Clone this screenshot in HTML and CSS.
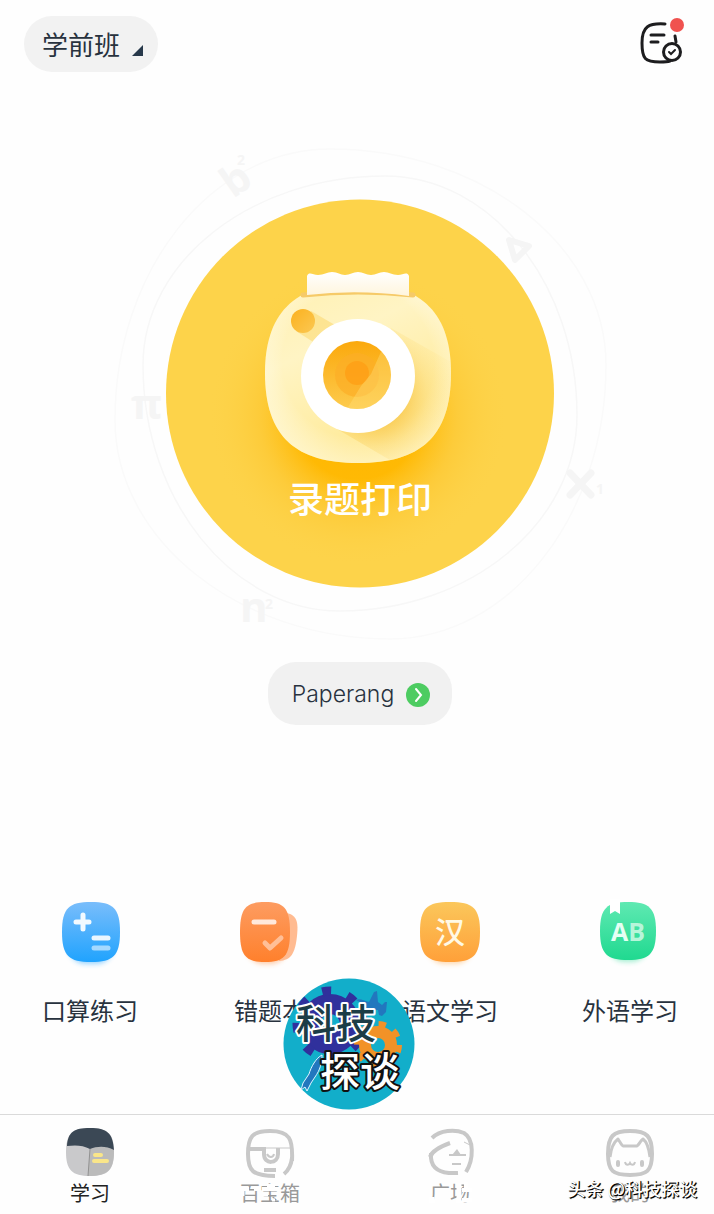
FILE: index.html
```html
<!DOCTYPE html>
<html lang="zh-CN">
<head>
<meta charset="utf-8">
<meta name="viewport" content="width=device-width, initial-scale=1">
<title>学习</title>
<link rel="stylesheet" href="styles.css">
</head>
<body>
<div class="page">
  <header class="topbar">
    <button class="grade" type="button">学前班
      <svg class="grade-mark" viewBox="0 0 11 11" aria-hidden="true"><path d="M11 0V11H0Z" fill="#27384a"/></svg>
    </button>
    <button class="tasks" type="button" aria-label="任务">
      <svg viewBox="0 0 48 48" fill="none" stroke="#1d1d1f" stroke-width="3" stroke-linecap="round" aria-hidden="true">
        <path d="M27 4C11 3 4 6 4 23C4 39 7 42 22 42C25 42 29 42 32 41M37 16L38 22"/>
        <path d="M13 15H26M13 22H20"/>
        <circle cx="34" cy="32" r="8.500"/>
        <path d="M31 32L33 34L37 30" stroke-width="2"/>
        <circle cx="39" cy="5" r="7" fill="#f0524f" stroke="none"/>
      </svg>
    </button>
  </header>

  <main class="main">
    <button class="hero" type="button">
      <svg class="hero-art" viewBox="100 130 520 520" aria-hidden="true">
        <defs>
          <radialGradient id="glow" cx="358" cy="416" r="150" gradientUnits="userSpaceOnUse">
            <stop offset="0" stop-color="#ffb600"/><stop offset=".42" stop-color="#ffb800" stop-opacity=".95"/>
            <stop offset=".66" stop-color="#fdc42a" stop-opacity=".5"/><stop offset="1" stop-color="#fdd34a" stop-opacity="0"/>
          </radialGradient>
          <linearGradient id="body" x1="0" y1="0" x2=".5" y2="1">
            <stop offset="0" stop-color="#fff0b0"/><stop offset=".4" stop-color="#fff4c4"/><stop offset="1" stop-color="#ffe993"/>
          </linearGradient>
          <radialGradient id="rim" cx=".5" cy=".45" r=".58">
            <stop offset=".7" stop-color="#fff" stop-opacity="0"/><stop offset="1" stop-color="#fffce8" stop-opacity=".55"/>
          </radialGradient>
          <radialGradient id="cast" cx="374" cy="394" r="82" gradientUnits="userSpaceOnUse">
            <stop offset=".4" stop-color="#f9c94e" stop-opacity=".8"/><stop offset=".65" stop-color="#fbd568" stop-opacity=".4"/><stop offset="1" stop-color="#ffe68f" stop-opacity=".1"/>
          </radialGradient>
          <linearGradient id="flash" x1="0" y1="0" x2="1" y2="1">
            <stop offset="0" stop-color="#fbb11e"/><stop offset="1" stop-color="#fbc853"/>
          </linearGradient>
          <linearGradient id="lens" x1="0" y1="0" x2="0" y2="1">
            <stop offset="0" stop-color="#fba90d"/><stop offset="1" stop-color="#fdcb4d"/>
          </linearGradient>
          <linearGradient id="paper" x1="0" y1="0" x2="0" y2="1">
            <stop offset="0" stop-color="#fff"/><stop offset="1" stop-color="#fff5dc"/>
          </linearGradient>
          <clipPath id="bodyclip"><path d="M358 283C424 283 451 316 451 373C451 437 420 463 358 463C296 463 265 437 265 373C265 316 292 283 358 283Z"/></clipPath>
          <clipPath id="lensclip"><circle cx="357" cy="375" r="34"/></clipPath>
        </defs>
        <g fill="none" stroke="#f7f7f7" stroke-width="1.500">
          <path d="M385 176C491 176 577 284 577 415C577 523 470 611 340 611C232 611 143 500 143 365C143 261 252 176 385 176Z"/>
          <path d="M330 149C482 149 606 246 606 365C606 516 509 639 390 639C239 639 115 540 115 420C115 271 211 149 330 149Z" stroke="#fafafa"/>
        </g>
        <g class="symbols">
          <text transform="translate(233 199) rotate(-35)">b</text>
          <text class="small" x="237" y="165">2</text>
          <text x="131" y="419">π</text>
          <path d="M570 473L591 495M591 473L570 495" stroke="#f5f5f5" stroke-width="7" stroke-linecap="round"/>
          <text class="small" x="596" y="494">1</text>
          <text x="240" y="622">n</text>
          <text class="small" x="265" y="609">2</text>
          <path d="M509 240L529 246L515 260Z" fill="none" stroke="#f5f5f5" stroke-width="6" stroke-linejoin="round"/>
        </g>
        <circle cx="360" cy="393.500" r="194" fill="#fdd34a"/>
        <circle cx="358" cy="416" r="150" fill="url(#glow)"/>
        <path d="M358 283C424 283 451 316 451 373C451 437 420 463 358 463C296 463 265 437 265 373C265 316 292 283 358 283Z" fill="url(#body)"/>
        <g clip-path="url(#bodyclip)">
          <path d="M265 280H451V464H265Z" fill="url(#rim)"/>
          <path d="M391 328L451 362V463H395L337 429Z" fill="url(#cast)"/>
          <path d="M311 311L340 328L318 345L296 331Z" fill="#fbd566" opacity=".5"/>
        </g>
        <path d="M303 295Q358 289 413 295" fill="none" stroke="#f6ca68" stroke-width="5" stroke-linecap="round"/>
        <path d="M307 276C309 271 313 275 318 275C324 275 327 272 332 272C338 272 340 275 345 275C350 275 353 272 358 272C363 272 366 275 371 275C376 275 379 272 384 272C389 272 392 275 398 275C403 275 407 271 409 276V296Q358 289 307 295Z" fill="url(#paper)"/>
        <circle cx="303" cy="321" r="12" fill="url(#flash)"/>
        <circle cx="358" cy="376" r="57" fill="#fff"/>
        <circle cx="357" cy="375" r="34" fill="url(#lens)"/>
        <circle cx="357" cy="375" r="22" fill="#fcae27" opacity=".7"/>
        <circle cx="357" cy="373" r="12" fill="#ff9d14" opacity=".75"/>
        <path clip-path="url(#lensclip)" d="M384 345L371 374L361 386L345 412H400V345Z" fill="#ffdf79" opacity=".38"/>
      </svg>
      <span class="hero-label">录题打印</span>
    </button>
    <button class="device" type="button">Paperang
      <svg viewBox="0 0 24 24" aria-hidden="true"><circle cx="12" cy="12" r="12" fill="#4dcc61"/><path d="M10 6L15 12L10 18" fill="none" stroke="#fff" stroke-width="2" stroke-linecap="round"/></svg>
    </button>
  </main>

  <nav class="tools" aria-label="练习">
    <a class="tool" href="#oral">
      <svg viewBox="0 0 72 72" aria-hidden="true">
        <defs>
          <linearGradient id="blue" x1="0" y1="0" x2="0" y2="1"><stop offset="0" stop-color="#79bdfb"/><stop offset="1" stop-color="#20a3fe"/></linearGradient>
          <filter id="soft" x="-20%" y="-20%" width="140%" height="150%"><feGaussianBlur stdDeviation="2.500"/></filter>
        </defs>
        <rect x="14" y="18" width="46" height="50" rx="18" fill="#20a3fe" opacity=".45" filter="url(#soft)"/>
        <path d="M37 6C59 6 66 12 66 36C66 60 59 66 37 66C15 66 8 60 8 36C8 12 15 6 37 6Z" fill="url(#blue)"/>
        <path d="M22 26H35M29 19V33" stroke="#f2faff" stroke-width="5" stroke-linecap="round"/>
        <path d="M40 42H54" stroke="#e9f6ff" stroke-width="5" stroke-linecap="round"/>
        <path d="M40 52H54" stroke="#a5d9ff" stroke-width="5" stroke-linecap="round"/>
      </svg>
      <span>口算练习</span>
    </a>
    <a class="tool" href="#mistakes">
      <svg viewBox="0 0 72 72" aria-hidden="true">
        <defs><linearGradient id="orange" x1="0" y1="0" x2="0" y2="1"><stop offset="0" stop-color="#fd9c61"/><stop offset="1" stop-color="#ff802c"/></linearGradient></defs>
        <rect x="12" y="18" width="42" height="50" rx="18" fill="#ff802c" opacity=".4" filter="url(#soft)"/>
        <path d="M48 16C61 18 65 22 63 40C61 58 57 64 45 65Z" fill="#ffbb91"/>
        <path d="M31 6C50 6 56 12 56 36C56 60 50 66 31 66C12 66 6 60 6 36C6 12 12 6 31 6Z" fill="url(#orange)"/>
        <path d="M20 26H40" stroke="#ffe9dc" stroke-width="5" stroke-linecap="round"/>
        <path d="M31 47L36 52L47 42" fill="none" stroke="#ffbf97" stroke-width="5" stroke-linecap="round" stroke-linejoin="round"/>
      </svg>
      <span>错题本</span>
    </a>
    <a class="tool" href="#chinese">
      <svg viewBox="0 0 72 72" aria-hidden="true">
        <defs><linearGradient id="amber" x1="0" y1="0" x2="0" y2="1"><stop offset="0" stop-color="#fbc75b"/><stop offset="1" stop-color="#ffa039"/></linearGradient></defs>
        <rect x="13" y="18" width="46" height="50" rx="18" fill="#ffa039" opacity=".4" filter="url(#soft)"/>
        <path d="M36 6C59 6 66 12 66 36C66 60 59 66 36 66C13 66 6 60 6 36C6 12 13 6 36 6Z" fill="url(#amber)"/>
        <text class="icon-han" x="36" y="47">汉</text>
      </svg>
      <span>语文学习</span>
    </a>
    <a class="tool" href="#english">
      <svg viewBox="0 0 72 72" aria-hidden="true">
        <defs><linearGradient id="green" x1="0" y1="0" x2="0" y2="1"><stop offset="0" stop-color="#5fe9b2"/><stop offset="1" stop-color="#20d990"/></linearGradient></defs>
        <rect x="13" y="18" width="42" height="48" rx="18" fill="#20d990" opacity=".4" filter="url(#soft)"/>
        <path d="M34 6C55 6 62 12 62 35C62 58 55 64 34 64C13 64 6 58 6 35C6 12 13 6 34 6Z" fill="url(#green)"/>
        <path d="M16 3H26V18L21 15L16 18Z" fill="#fff"/>
        <text class="icon-ab" x="17" y="45"><tspan>A</tspan><tspan fill="#b8f5da">B</tspan></text>
      </svg>
      <span>外语学习</span>
    </a>
  </nav>

  <div class="badge">
    <svg viewBox="0 0 132 132" role="img" aria-label="科技探谈">
      <defs><clipPath id="disc"><circle cx="66" cy="66" r="65.500"/></clipPath></defs>
      <circle cx="66" cy="66" r="65.500" fill="#12aeca"/>
      <g clip-path="url(#disc)">
        <circle cx="47" cy="46" r="20" fill="none" stroke="#30309c" stroke-width="20"/>
        <circle cx="47" cy="46" r="33" fill="none" stroke="#30309c" stroke-width="9" stroke-dasharray="9 16.900" stroke-dashoffset="8"/>
        <circle cx="95" cy="67" r="13" fill="none" stroke="#f29227" stroke-width="12"/>
        <circle cx="95" cy="67" r="20" fill="none" stroke="#f29227" stroke-width="8" stroke-dasharray="7 8.700"/>
        <path d="M73 22C77 20 81 23 86 24L91 14L94 13L95 24L99 27L102 24L104 24L103 34L99 38L96 37L95 32L88 32L79 35L76 33L84 28Z" fill="#2277be"/>
        <path d="M39 77C33 80 28 89 26 96L20 105L18 112L22 109L24 113L28 105L32 99C37 92 39 85 39 77Z" fill="#2277be" stroke="#dff6ff" stroke-width="1"/>
      </g>
      <text class="badge-dark" x="13" y="60">科技</text>
      <text class="badge-light" x="37" y="108">探谈</text>
    </svg>
  </div>

  <nav class="tabs" aria-label="主导航">
    <a class="tab tab-active" href="#study" aria-current="page">
      <svg viewBox="0 0 48 48" aria-hidden="true">
        <path d="M24 0C42 0 48 6 48 24C48 42 42 48 24 48C6 48 0 42 0 24C0 6 6 0 24 0Z" fill="#c9c9cb"/>
        <path d="M24 21C32 18 40 18 48 22C48 42 42 48 22 48Z" fill="#bbb"/>
        <path d="M1 18C2 4 8 0 24 0C41 0 47 5 48 22C40 18 32 18 24 21C17 17 9 17 1 18Z" fill="#3b4855"/>
        <path d="M24 21L22 48" stroke="#929292" stroke-width="1"/>
        <path d="M29 27H35M28 33H41" stroke="#fae689" stroke-width="4" stroke-linecap="round"/>
      </svg>
      <span>学习</span>
    </a>
    <a class="tab" href="#box">
      <svg viewBox="0 0 48 48" fill="none" stroke="#c8c8c8" stroke-width="4" aria-hidden="true">
        <path d="M46 33C47 11 44 3 24 3C6 3 2 9 2 26C2 43 7 48 29 48M46 30C45 38 43 42 38 46"/>
        <path d="M2 21H17M18 19V26C18 37 32 36 32 26V20M18 42H30"/>
        <path d="M21 26C23 30 27 30 28 26" stroke-width="2"/><path d="M18 20H45" stroke-width="1"/>
      </svg>
      <span>百宝箱</span>
      <svg class="wear" viewBox="0 0 60 24" stroke="#fff" aria-hidden="true"><path d="M0 8H9M14 8H19M22 8H39M27 5H35" stroke-width="4"/><path d="M23 14H28M32 19H35M3 10V15" stroke-width="3"/></svg>
    </a>
    <a class="tab" href="#square">
      <svg viewBox="0 0 48 48" fill="none" stroke="#c8c8c8" stroke-width="4" aria-hidden="true">
        <path d="M6 10C14 2 29 1 38 5C48 11 48 31 40 44"/>
        <path d="M5 25V30C6 41 14 46 32 45M4 29C6 23 13 19 24 15"/>
        <path d="M23 27H40M26 36H35" stroke-width="2"/><path d="M26 27L31 21L35 27Z" fill="#c8c8c8" stroke="none"/><path d="M38 14L44 17" stroke-width="1"/>
      </svg>
      <span>广场</span>
      <svg class="wear" viewBox="0 0 60 24" stroke="#fff" aria-hidden="true"><path d="M12 16V22M39 2V22" stroke-width="5"/><path d="M42 9H52M42 19H52M46 1V7" stroke-width="4"/></svg>
    </a>
    <a class="tab" href="#mine">
      <svg viewBox="0 0 48 48" fill="none" stroke="#c8c8c8" stroke-width="4" aria-hidden="true">
        <path d="M24 3C41 3 46 8 46 26C46 43 41 47 24 47C7 47 2 43 2 26C2 8 7 3 24 3Z"/>
        <path d="M4 29C5 20 8 14 12 11C14 14 16 18 17 18H31C33 17 34 13 37 11C41 14 43 21 44 29" stroke-width="3" stroke-linejoin="round"/>
        <path d="M12 34V37M36 34V37" stroke-linecap="round"/><path d="M19 34C20 38 23 37 24 35C25 37 28 38 29 34" stroke-width="2"/>
      </svg>
      <span>我的</span>
    </a>
    <p class="credit">头条 @科技探谈</p>
  </nav>
</div>
</body>
</html>
```

FILE: styles.css
```css
* { box-sizing: border-box; }

body {
  margin: 0;
  background: #fefefe;
  color: #28323e;
  font-family: "Noto Sans CJK SC", sans-serif;
}

button {
  border: 0;
  padding: 0;
  background: none;
  color: inherit;
  font: inherit;
  cursor: pointer;
}

a { color: inherit; text-decoration: none; }
svg { display: block; overflow: visible; }

.page {
  position: relative;
  display: flex;
  flex-direction: column;
  min-height: 100vh;
  overflow: hidden;
}

.topbar {
  display: flex;
  justify-content: space-between;
  align-items: center;
  padding: 16px 28px 0 24px;
}

.grade {
  display: flex;
  align-items: center;
  gap: 12px;
  padding: 8px 15px 8px 18px;
  border-radius: 28px;
  background: #f2f2f2;
  font-size: 26px;
  line-height: 40px;
}

.grade-mark { width: 11px; margin-top: 12px; }
.tasks svg { width: 48px; height: 48px; }

.main {
  display: flex;
  flex-direction: column;
  align-items: center;
  gap: 12px;
  padding: 58px 0 0 6px;
}

.hero {
  display: grid;
  width: 100%;
  max-width: 520px;
}

.hero-art, .hero-label { grid-area: 1 / 1; }
.hero-art { width: 100%; }

.hero-label {
  align-self: end;
  padding-bottom: 127px;
  color: #fff;
  font-size: 36px;
  line-height: 52px;
  font-weight: 500;
}

.symbols {
  fill: #f5f5f5;
  font-family: "Open Sans", sans-serif;
  font-size: 42px;
  font-weight: 700;
}

.symbols .small { font-size: 14px; }

.device {
  display: flex;
  align-items: center;
  gap: 12px;
  padding: 15px 22px 13px 24px;
  border-radius: 28px;
  background: #f1f1f1;
  font-family: Inter, sans-serif;
  font-size: 23px;
  line-height: 35px;
  font-weight: 300;
}

.device svg { width: 24px; }

.tools, .tabs {
  display: flex;
  justify-content: space-between;
  padding: 0 36px 0 42px;
}

.tools { margin-top: auto; padding-bottom: 85px; }

.tool, .tab {
  position: relative;
  display: flex;
  flex-direction: column;
  align-items: center;
  width: 96px;
}

.tool {
  gap: 23px;
  font-size: 24px;
  line-height: 38px;
  white-space: nowrap;
}

.tool svg { width: 72px; height: 72px; }

.icon-han {
  fill: #fff9e5;
  font-size: 30px;
  font-weight: 500;
  text-anchor: middle;
}

.icon-ab {
  fill: #e6fff4;
  font-family: "Open Sans", sans-serif;
  font-size: 25px;
  font-weight: 700;
}

.badge {
  position: absolute;
  bottom: 104px;
  left: calc(50% - 74px);
  width: 132px;
}

.badge text {
  font-size: 40px;
  font-weight: 500;
  paint-order: stroke;
  stroke-linejoin: round;
}

.badge-dark { fill: #1c3d46; stroke: #fff; stroke-width: 4px; }
.badge-light { fill: #fff; stroke: #111; stroke-width: 4px; }

.tabs {
  position: relative;
  height: 100px;
  padding-top: 13px;
  border-top: 1px solid #dadada;
}

.tab {
  gap: 5px;
  color: #999;
  font-size: 20px;
  line-height: 24px;
}

.tab > svg { width: 48px; height: 48px; }
.tab-active { color: #222; }

.tab > .wear {
  position: absolute;
  top: 53px;
  width: 60px;
  height: 24px;
}

.credit {
  position: absolute;
  right: 17px;
  bottom: 14px;
  margin: 0;
  color: #fff;
  font-size: 18px;
  line-height: 24px;
  font-weight: 500;
  text-shadow: 1px 1px 0 #000, 1px 1px 1px #000;
}
```
